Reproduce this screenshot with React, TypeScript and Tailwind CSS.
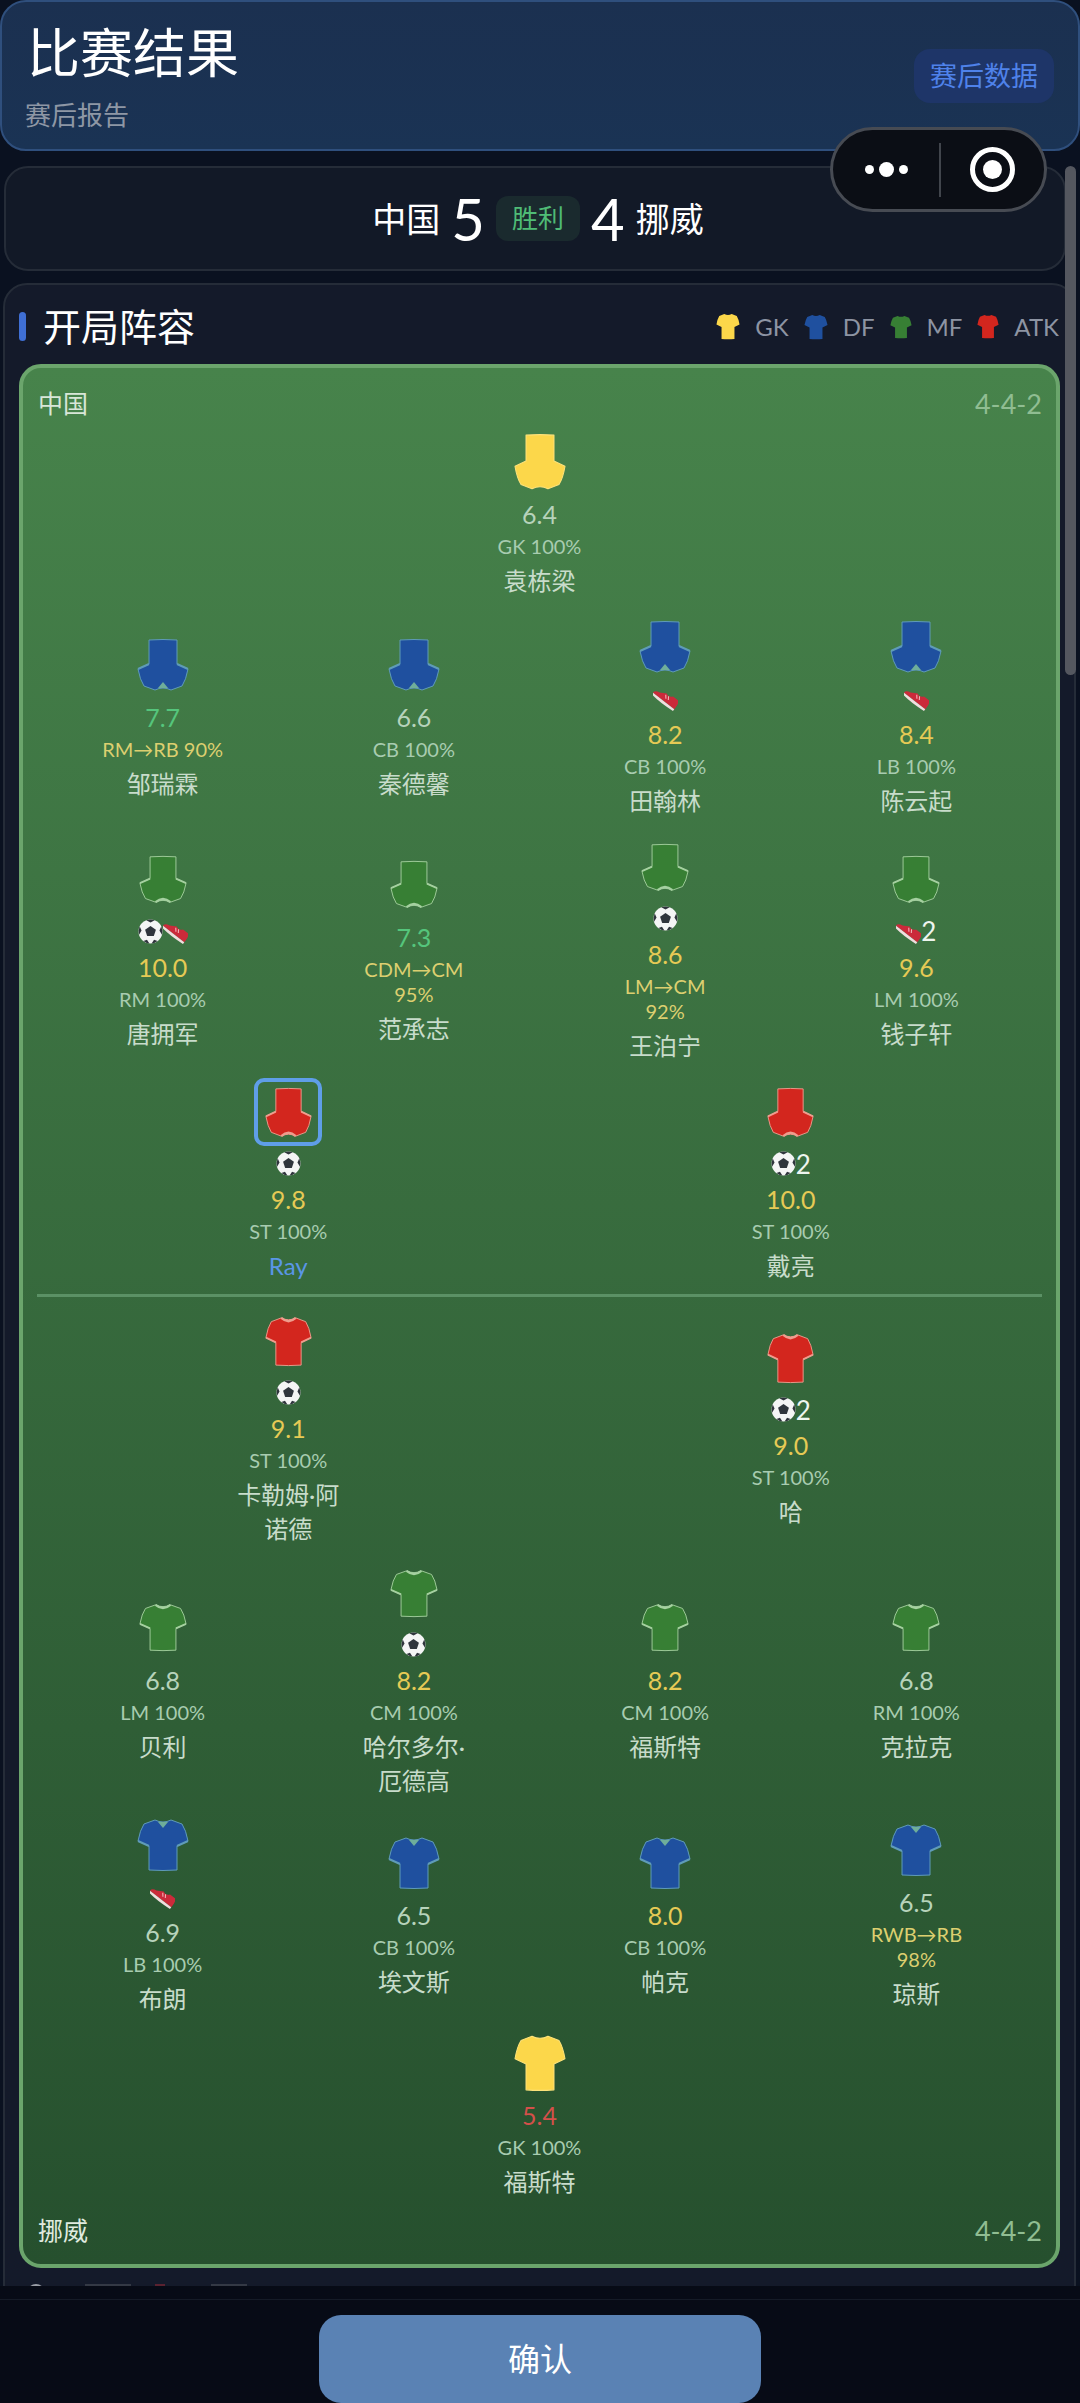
import React from 'react';

type Kit = 'gk' | 'df' | 'mf' | 'atk';

interface Player {
  name: string;
  rating: string;
  ratingColor?: string;
  pos: string;
  moved?: boolean;
  kit: Kit;
  goals?: number;
  assists?: number;
  me?: boolean;
}

const KITS: Record<Kit, { fill: string; trim: string; size: string; small: string }> = {
  gk: { fill: '#fcd74a', trim: '#fde27a', size: 'w-[52px] h-[58px]', small: 'w-[24px] h-[27px]' },
  df: { fill: '#1f509f', trim: '#5f9bb8', size: 'w-[52px] h-[54px]', small: 'w-[24px] h-[26px]' },
  mf: { fill: '#377f34', trim: '#a5d0a0', size: 'w-[48px] h-[49px]', small: 'w-[22px] h-[24px]' },
  atk: { fill: '#d3261e', trim: '#ee9d8e', size: 'w-[47px] h-[51px]', small: 'w-[22px] h-[25px]' },
};

const GOLD = 'text-[#e6ca55]';
const GREEN = 'text-[#55c57c]';
const RED = 'text-[#d4504a]';
const PLAIN = 'text-[#b7d3bb]';

const topRows: Player[][] = [
  [{ name: '袁栋梁', rating: '6.4', pos: 'GK 100%', kit: 'gk' }],
  [
    { name: '邹瑞霖', rating: '7.7', ratingColor: GREEN, pos: 'RM→RB 90%', moved: true, kit: 'df' },
    { name: '秦德馨', rating: '6.6', pos: 'CB 100%', kit: 'df' },
    { name: '田翰林', rating: '8.2', ratingColor: GOLD, pos: 'CB 100%', kit: 'df', assists: 1 },
    { name: '陈云起', rating: '8.4', ratingColor: GOLD, pos: 'LB 100%', kit: 'df', assists: 1 },
  ],
  [
    { name: '唐拥军', rating: '10.0', ratingColor: GOLD, pos: 'RM 100%', kit: 'mf', goals: 1, assists: 1 },
    { name: '范承志', rating: '7.3', ratingColor: GREEN, pos: 'CDM→CM 95%', moved: true, kit: 'mf' },
    { name: '王泊宁', rating: '8.6', ratingColor: GOLD, pos: 'LM→CM 92%', moved: true, kit: 'mf', goals: 1 },
    { name: '钱子轩', rating: '9.6', ratingColor: GOLD, pos: 'LM 100%', kit: 'mf', assists: 2 },
  ],
  [
    { name: 'Ray', rating: '9.8', ratingColor: GOLD, pos: 'ST 100%', kit: 'atk', goals: 1, me: true },
    { name: '戴亮', rating: '10.0', ratingColor: GOLD, pos: 'ST 100%', kit: 'atk', goals: 2 },
  ],
];

const bottomRows: Player[][] = [
  [
    { name: '卡勒姆·阿诺德', rating: '9.1', ratingColor: GOLD, pos: 'ST 100%', kit: 'atk', goals: 1 },
    { name: '哈', rating: '9.0', ratingColor: GOLD, pos: 'ST 100%', kit: 'atk', goals: 2 },
  ],
  [
    { name: '贝利', rating: '6.8', pos: 'LM 100%', kit: 'mf' },
    { name: '哈尔多尔·厄德高', rating: '8.2', ratingColor: GOLD, pos: 'CM 100%', kit: 'mf', goals: 1 },
    { name: '福斯特', rating: '8.2', ratingColor: GOLD, pos: 'CM 100%', kit: 'mf' },
    { name: '克拉克', rating: '6.8', pos: 'RM 100%', kit: 'mf' },
  ],
  [
    { name: '布朗', rating: '6.9', pos: 'LB 100%', kit: 'df', assists: 1 },
    { name: '埃文斯', rating: '6.5', pos: 'CB 100%', kit: 'df' },
    { name: '帕克', rating: '8.0', ratingColor: GOLD, pos: 'CB 100%', kit: 'df' },
    { name: '琼斯', rating: '6.5', pos: 'RWB→RB 98%', moved: true, kit: 'df' },
  ],
  [{ name: '福斯特', rating: '5.4', ratingColor: RED, pos: 'GK 100%', kit: 'gk' }],
];

function Shirt({ kit, flipped, small }: { kit: Kit; flipped?: boolean; small?: boolean }) {
  const k = KITS[kit];
  const sizeClass = small ? k.small : k.size;
  return (
    <svg
      viewBox="0 0 52 54"
      preserveAspectRatio="none"
      className={`${sizeClass} ${flipped ? 'rotate-180' : ''}`}
    >
      <path
        d="M18 2 Q26 6 34 2 L45 6 Q49 12 51 23 L40 28 L40 52 Q26 53 12 52 L12 28 L1 23 Q3 12 7 6 Z"
        fill={k.fill}
        stroke={small ? 'none' : k.trim}
        strokeWidth="1"
        strokeLinejoin="round"
      />
      {!small && kit === 'df' && <path d="M21 4 L31 4 L26 10 Z" fill="#6fae9a" />}
      {!small && kit !== 'df' && kit !== 'gk' && (
        <path d="M18 2 Q26 9 34 2" fill="none" stroke={k.trim} strokeWidth="2.5" />
      )}
      {!small && kit !== 'gk' && (
        <path d="M1 23 L12 28 M51 23 L40 28" fill="none" stroke={k.trim} strokeWidth="2" />
      )}
    </svg>
  );
}

function Ball() {
  return (
    <svg viewBox="0 0 24 24" className="w-[25px] h-[25px] shrink-0">
      <circle cx="12" cy="12" r="11.5" fill="#f4f5f5" />
      <path d="M12 6.6 L17.2 10.4 L15.2 16.4 L8.8 16.4 L6.8 10.4 Z" fill="#2f353c" />
      <path d="M8 1.3 Q12 -0.2 16 1.3 L12 3.4 Z" fill="#2f353c" />
      <path d="M22.4 7 Q24 11.4 23 15 L20.6 11 Z" fill="#2f353c" />
      <path d="M1.6 7 Q0 11.4 1 15 L3.4 11 Z" fill="#2f353c" />
      <path d="M5.2 21 Q8.6 23.6 11 23.6 L8.6 19.8 Z" fill="#2f353c" />
      <path d="M18.8 21 Q15.4 23.6 13 23.6 L15.4 19.8 Z" fill="#2f353c" />
    </svg>
  );
}

function Boot() {
  return (
    <svg viewBox="0 0 24 24" className="w-[25px] h-[25px] shrink-0">
      <g transform="rotate(38 12 12)">
        <path d="M-1 15 Q-1 11.5 4 11 L10 7.5 Q14 9.5 16.5 6 L23.5 6 Q25.5 10 25 15 Z" fill="#cb2a3a" />
        <path d="M-1 15 L25 15 L25 17 Q10 18.5 0 17 Z" fill="#efdfdf" />
        <path d="M10 9 L12.5 12 M13 8.5 L15 11.5" stroke="#f3b8bc" strokeWidth="1" />
      </g>
    </svg>
  );
}

function Events({ goals, assists }: { goals?: number; assists?: number }) {
  if (!goals && !assists) return null;
  return (
    <div className="h-[35px] flex items-center justify-center text-[26px] leading-none text-[#eef5ef]">
      {goals ? (
        <span className="flex items-center">
          <Ball />
          {goals > 1 && goals}
        </span>
      ) : null}
      {assists ? (
        <span className="flex items-center">
          <Boot />
          {assists > 1 && assists}
        </span>
      ) : null}
    </div>
  );
}

function PlayerCell({ player, flipped }: { player: Player; flipped?: boolean }) {
  return (
    <div className="flex-1 flex flex-col items-center text-center">
      <div
        className={`w-[68px] h-[68px] flex items-center justify-center rounded-[10px] ${
          player.me ? 'border-[4px] border-[#5f9ee8]' : ''
        }`}
      >
        <Shirt kit={player.kit} flipped={flipped} />
      </div>
      <Events goals={player.goals} assists={player.assists} />
      <div className={`mt-[3px] h-[30px] text-[25px] leading-[30px] ${player.ratingColor ?? PLAIN}`}>
        {player.rating}
      </div>
      <div
        className={`mt-[5px] w-[124px] text-[20px] leading-[25px] ${
          player.moved ? 'text-[#dccf70]' : 'text-[#a8ccb0]'
        }`}
      >
        {player.pos}
      </div>
      <div
        className={`mt-[5px] w-[120px] text-[24px] leading-[34px] ${
          player.me ? 'text-[#5a96e6]' : 'text-[#c8dccb]'
        }`}
      >
        {player.name}
      </div>
    </div>
  );
}

function Pitch() {
  return (
    <div className="mt-[9px] mx-[14px] border-[4px] border-[#6ba56c] rounded-[22px] px-[14px] pb-[17px] bg-gradient-to-b from-[#47834b] to-[#26502e]">
      <div className="pt-[20px] h-[52px] pl-[1px] flex items-center justify-between">
        <span className="text-[25px] text-[#d8e6d8]">中国</span>
        <span className="text-[27px] text-[#90bd92]">4-4-2</span>
      </div>
      <div className="mt-[8px] flex flex-col gap-[15px]">
        {topRows.map((row, idx) => (
          <div key={idx} className="flex items-center">
            {row.map(p => (
              <PlayerCell key={p.name} player={p} flipped />
            ))}
          </div>
        ))}
      </div>
      <div className="mt-[11px] mb-[10px] h-[3px] bg-[#5b9165]" />
      <div className="flex flex-col gap-[13px]">
        {bottomRows.map((row, idx) => (
          <div key={idx} className="flex items-center">
            {row.map(p => (
              <PlayerCell key={p.name + p.pos} player={p} />
            ))}
          </div>
        ))}
      </div>
      <div className="mt-[16px] h-[32px] pl-[1px] flex items-center justify-between">
        <span className="text-[25px] text-[#e0ebe0]">挪威</span>
        <span className="text-[27px] text-[#90bd92]">4-4-2</span>
      </div>
    </div>
  );
}

const LEGEND: { kit: Kit; label: string }[] = [
  { kit: 'gk', label: 'GK' },
  { kit: 'df', label: 'DF' },
  { kit: 'mf', label: 'MF' },
  { kit: 'atk', label: 'ATK' },
];

export default function App() {
  return (
    <div
      className="relative w-[1080px] h-[2403px] overflow-hidden flex flex-col bg-[#0a1120] text-white"
      style={{ fontFamily: 'Lato, "Noto Sans CJK SC", sans-serif' }}
    >
      <div className="flex-1 min-h-0 overflow-hidden">
        {/* Header */}
        <header className="h-[151px] pl-[23px] pr-[24px] flex items-start justify-between rounded-[26px] border-[2px] border-[#2f4f7d] bg-gradient-to-b from-[#1b3050] to-[#1a3354]">
          <div>
            <h1 className="mt-[18px] ml-[2px] text-[53px] leading-[66px] font-normal">比赛结果</h1>
            <p className="mt-[12px] text-[26px] leading-[34px] text-[#8e97a5]">赛后报告</p>
          </div>
          <button className="mt-[47px] w-[140px] h-[54px] rounded-[16px] bg-[#1e3568] text-[27px] text-[#4f82ea]">
            赛后数据
          </button>
        </header>

        {/* Score */}
        <section className="mt-[15px] mx-[4px] mr-[14px] h-[105px] pl-[6px] flex items-center justify-center gap-[11px] rounded-[24px] border-[2px] border-[#252c38] bg-[#121927]">
          <span className="text-[34px]">中国</span>
          <span className="text-[58px] leading-none">5</span>
          <span className="w-[84px] h-[45px] rounded-[12px] bg-[#1a2a2e] flex items-center justify-center text-[26px] text-[#4fbb76]">
            胜利
          </span>
          <span className="text-[58px] leading-none">4</span>
          <span className="text-[34px]">挪威</span>
        </section>

        {/* Lineup */}
        <section className="mt-[12px] mx-[3px] mr-[4px] rounded-t-[24px] border-[2px] border-[#252c38] bg-[#141a2a] pb-[20px]">
          <div className="h-[70px] pt-[13px] pl-[14px] pr-[15px] flex items-center justify-between">
            <div className="flex items-center gap-[17px]">
              <span className="w-[7px] h-[29px] rounded-full bg-[#3f6fd4]" />
              <h2 className="text-[38px] font-normal">开局阵容</h2>
            </div>
            <div className="flex items-center text-[24px] text-[#8d94a3]">
              {LEGEND.map(item => (
                <span key={item.kit} className="ml-[15px] flex items-center gap-[15px]">
                  <Shirt kit={item.kit} small />
                  {item.label}
                </span>
              ))}
            </div>
          </div>
          <Pitch />
          <div className="mt-[16px] pl-[22px] flex items-center">
            <span className="w-[18px] h-[18px] rounded-full bg-[#9a9ea6]" />
            <span className="ml-[40px] w-[46px] h-[18px] bg-[#343945]" />
            <span className="ml-[24px] w-[10px] h-[18px] bg-[#5a2230]" />
            <span className="ml-[46px] w-[36px] h-[18px] bg-[#343945]" />
          </div>
        </section>
      </div>

      {/* Footer */}
      <footer className="h-[117px] shrink-0 pt-[13px] bg-[#070b16]">
        <div className="h-full border-t border-[#151b27] pt-[15px] flex justify-center">
          <button className="w-[442px] h-[88px] rounded-[22px] bg-[#5a82b4] text-[32px] text-white">确认</button>
        </div>
      </footer>

      {/* WeChat capsule */}
      <div className="absolute left-[830px] top-[127px] w-[217px] h-[85px] rounded-full border-[3px] border-[#474b53] bg-[#0b0e15] flex items-center">
        <div className="w-[106px] flex items-center justify-center gap-[5px]">
          <span className="w-[9px] h-[9px] rounded-full bg-white" />
          <span className="w-[15px] h-[15px] rounded-full bg-white" />
          <span className="w-[9px] h-[9px] rounded-full bg-white" />
        </div>
        <span className="w-[2px] h-[54px] bg-[#41454c]" />
        <div className="flex-1 flex items-center justify-center">
          <span className="w-[45px] h-[45px] rounded-full border-[5px] border-white flex items-center justify-center">
            <span className="w-[19px] h-[19px] rounded-full bg-white" />
          </span>
        </div>
      </div>

      {/* Scrollbar */}
      <div className="absolute left-[1065px] top-[166px] w-[11px] h-[509px] rounded-full bg-[#54575f]" />
    </div>
  );
}
